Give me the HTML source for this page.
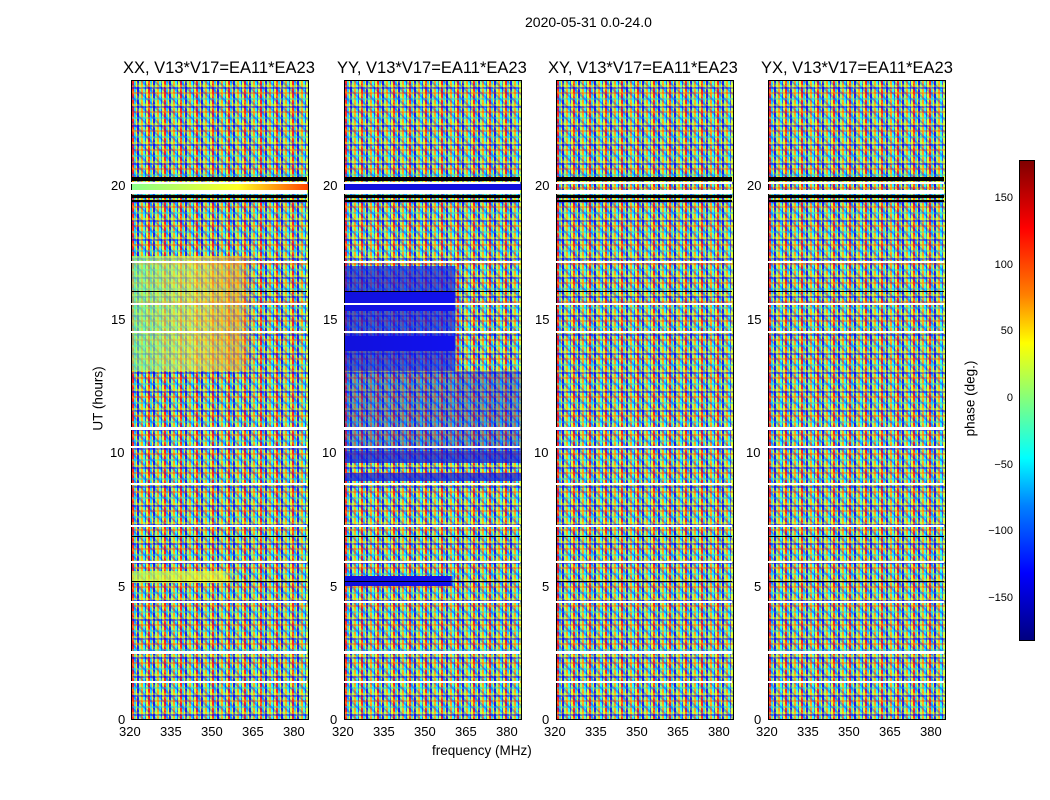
<!DOCTYPE html>
<html><head><meta charset="utf-8"><style>
body{margin:0;width:1050px;height:800px;background:#fff;position:relative;overflow:hidden;font-family:"Liberation Sans","DejaVu Sans",sans-serif;color:#000}
.t{position:absolute;font-size:13px;white-space:nowrap}
.tt{position:absolute;font-size:16.5px;white-space:nowrap}
.p{position:absolute;top:80px;width:176px;height:638px;border:1px solid #000;overflow:hidden;
background:
repeating-linear-gradient(45deg,transparent 0 2px,rgba(255,255,0,.3) 2px 4px,transparent 4px 7px,rgba(0,0,255,.3) 7px 9px),
repeating-linear-gradient(0deg,transparent 0 3px,rgba(0,0,255,.45) 3px 5px,rgba(255,255,0,.35) 5px 7px,transparent 7px 11px,rgba(0,200,255,.45) 11px 13px,transparent 13px 17px,rgba(255,60,0,.4) 17px 19px),
repeating-linear-gradient(90deg,#f22 0 2px,#2cf 2px 4px,#ee2 4px 5px,#22e 5px 7px,#8f8 7px 9px,#f92 9px 11px,#2ff 11px 13px,#44f 13px 14px,#cf4 14px 16px)}
.l{position:absolute;left:0;width:100%}
.w{background:#fff}.k{background:#000}
.cb{position:absolute;font-size:11px;width:30px;text-align:right;left:983px}
</style></head><body>
<div class="t" style="left:525px;top:14px;font-size:14px">2020-05-31 0.0-24.0</div>

<div class="tt" style="left:123px;top:59px">XX, V13*V17=EA11*EA23</div>
<div class="tt" style="left:337px;top:59px">YY, V13*V17=EA11*EA23</div>
<div class="tt" style="left:548px;top:59px">XY, V13*V17=EA11*EA23</div>
<div class="tt" style="left:761px;top:59px">YX, V13*V17=EA11*EA23</div>

<div class="p" style="left:131px">
 <div class="l" style="top:175px;height:115px;opacity:.6;background:linear-gradient(90deg,#8f8 0,#ee4 35%,#fa2 60%,transparent 70%)"></div>
 <div class="l" style="top:490px;height:12px;opacity:.7;background:linear-gradient(90deg,#cf4 0,#ff2 50%,transparent 60%)"></div>
 <div class="l" style="top:103px;height:6px;background:linear-gradient(90deg,#8f8,#ff2 60%,#f40)"></div>
</div>
<div class="p" style="left:344px">
 <div class="l" style="top:185px;height:105px;opacity:.65;background:linear-gradient(90deg,#11d 0,#11e 62%,transparent 64%)"></div>
 <div class="l" style="top:210px;height:20px;background:linear-gradient(90deg,#11d 0,#11e 62%,transparent 63%)"></div>
 <div class="l" style="top:255px;height:15px;background:linear-gradient(90deg,#11d 0,#11e 62%,transparent 63%)"></div>
 <div class="l" style="top:290px;height:80px;opacity:.35;background:#11d"></div>
 <div class="l" style="top:370px;height:12px;opacity:.7;background:#11d"></div>
 <div class="l" style="top:392px;height:8px;opacity:.7;background:#11d"></div>
 <div class="l" style="top:495px;height:10px;background:linear-gradient(90deg,#11d 0,#11e 60%,transparent 62%)"></div>
 <div class="l" style="top:103px;height:6px;background:#11d"></div>
</div>
<div class="p" style="left:556px"></div>
<div class="p" style="left:768px"></div>

<div style="position:absolute;left:131px;top:81px;width:176px;height:638px">
 <div class="l k" style="top:96px;height:4px"></div><div class="l w" style="top:101px;height:2px"></div>
 <div class="l w" style="top:109px;height:4px"></div><div class="l k" style="top:114px;height:3px"></div><div class="l k" style="top:119px;height:2px"></div>
 <div class="l w" style="top:180px;height:2px"></div><div class="l w" style="top:222px;height:2px"></div><div class="l k" style="top:210px;height:1px"></div>
 <div class="l w" style="top:250px;height:2px"></div><div class="l w" style="top:346px;height:3px"></div>
 <div class="l w" style="top:402px;height:2px"></div><div class="l w" style="top:365px;height:2px"></div><div class="l w" style="top:444px;height:2px"></div>
 <div class="l w" style="top:480px;height:2px"></div><div class="l w" style="top:520px;height:2px"></div><div class="l w" style="top:570px;height:3px"></div>
 <div class="l w" style="top:600px;height:2px"></div><div class="l k" style="top:500px;height:1px"></div><div class="l k" style="top:455px;height:1px"></div>
</div>
<div style="position:absolute;left:344px;top:81px;width:176px;height:638px">
 <div class="l k" style="top:96px;height:4px"></div><div class="l w" style="top:101px;height:2px"></div>
 <div class="l w" style="top:109px;height:4px"></div><div class="l k" style="top:114px;height:3px"></div><div class="l k" style="top:119px;height:2px"></div>
 <div class="l w" style="top:180px;height:2px"></div><div class="l w" style="top:222px;height:2px"></div><div class="l k" style="top:210px;height:1px"></div>
 <div class="l w" style="top:250px;height:2px"></div><div class="l w" style="top:346px;height:3px"></div>
 <div class="l w" style="top:402px;height:2px"></div><div class="l w" style="top:365px;height:2px"></div><div class="l w" style="top:444px;height:2px"></div>
 <div class="l w" style="top:480px;height:2px"></div><div class="l w" style="top:520px;height:2px"></div><div class="l w" style="top:570px;height:3px"></div>
 <div class="l w" style="top:600px;height:2px"></div><div class="l k" style="top:500px;height:1px"></div><div class="l k" style="top:455px;height:1px"></div>
</div>
<div style="position:absolute;left:556px;top:81px;width:176px;height:638px">
 <div class="l k" style="top:96px;height:4px"></div><div class="l w" style="top:101px;height:2px"></div>
 <div class="l w" style="top:109px;height:4px"></div><div class="l k" style="top:114px;height:3px"></div><div class="l k" style="top:119px;height:2px"></div>
 <div class="l w" style="top:180px;height:2px"></div><div class="l w" style="top:222px;height:2px"></div><div class="l k" style="top:210px;height:1px"></div>
 <div class="l w" style="top:250px;height:2px"></div><div class="l w" style="top:346px;height:3px"></div>
 <div class="l w" style="top:402px;height:2px"></div><div class="l w" style="top:365px;height:2px"></div><div class="l w" style="top:444px;height:2px"></div>
 <div class="l w" style="top:480px;height:2px"></div><div class="l w" style="top:520px;height:2px"></div><div class="l w" style="top:570px;height:3px"></div>
 <div class="l w" style="top:600px;height:2px"></div><div class="l k" style="top:500px;height:1px"></div><div class="l k" style="top:455px;height:1px"></div>
</div>
<div style="position:absolute;left:768px;top:81px;width:176px;height:638px">
 <div class="l k" style="top:96px;height:4px"></div><div class="l w" style="top:101px;height:2px"></div>
 <div class="l w" style="top:109px;height:4px"></div><div class="l k" style="top:114px;height:3px"></div><div class="l k" style="top:119px;height:2px"></div>
 <div class="l w" style="top:180px;height:2px"></div><div class="l w" style="top:222px;height:2px"></div><div class="l k" style="top:210px;height:1px"></div>
 <div class="l w" style="top:250px;height:2px"></div><div class="l w" style="top:346px;height:3px"></div>
 <div class="l w" style="top:402px;height:2px"></div><div class="l w" style="top:365px;height:2px"></div><div class="l w" style="top:444px;height:2px"></div>
 <div class="l w" style="top:480px;height:2px"></div><div class="l w" style="top:520px;height:2px"></div><div class="l w" style="top:570px;height:3px"></div>
 <div class="l w" style="top:600px;height:2px"></div><div class="l k" style="top:500px;height:1px"></div><div class="l k" style="top:455px;height:1px"></div>
</div>

<div class="t" style="left:111px;top:178px">20</div><div class="t" style="left:111px;top:312px">15</div><div class="t" style="left:110px;top:445px">10</div><div class="t" style="left:118px;top:579px">5</div><div class="t" style="left:118px;top:712px">0</div>
<div class="t" style="left:323px;top:178px">20</div><div class="t" style="left:323px;top:312px">15</div><div class="t" style="left:322px;top:445px">10</div><div class="t" style="left:330px;top:579px">5</div><div class="t" style="left:330px;top:712px">0</div>
<div class="t" style="left:535px;top:178px">20</div><div class="t" style="left:535px;top:312px">15</div><div class="t" style="left:534px;top:445px">10</div><div class="t" style="left:542px;top:579px">5</div><div class="t" style="left:542px;top:712px">0</div>
<div class="t" style="left:747px;top:178px">20</div><div class="t" style="left:747px;top:312px">15</div><div class="t" style="left:746px;top:445px">10</div><div class="t" style="left:754px;top:579px">5</div><div class="t" style="left:754px;top:712px">0</div>

<div class="t" style="left:119px;top:724px">320</div><div class="t" style="left:160px;top:724px">335</div><div class="t" style="left:201px;top:724px">350</div><div class="t" style="left:242px;top:724px">365</div><div class="t" style="left:283px;top:724px">380</div>
<div class="t" style="left:332px;top:724px">320</div><div class="t" style="left:373px;top:724px">335</div><div class="t" style="left:414px;top:724px">350</div><div class="t" style="left:455px;top:724px">365</div><div class="t" style="left:496px;top:724px">380</div>
<div class="t" style="left:544px;top:724px">320</div><div class="t" style="left:585px;top:724px">335</div><div class="t" style="left:626px;top:724px">350</div><div class="t" style="left:667px;top:724px">365</div><div class="t" style="left:708px;top:724px">380</div>
<div class="t" style="left:756px;top:724px">320</div><div class="t" style="left:797px;top:724px">335</div><div class="t" style="left:838px;top:724px">350</div><div class="t" style="left:879px;top:724px">365</div><div class="t" style="left:920px;top:724px">380</div>

<div class="t" style="left:432px;top:743px;font-size:13.5px">frequency (MHz)</div>
<div class="t" style="left:48px;top:391px;transform:rotate(-90deg);width:100px;text-align:center;font-size:13.5px">UT (hours)</div>

<div style="position:absolute;left:1019px;top:160px;width:14px;height:479px;border:1px solid #000;background:linear-gradient(180deg,#800000 0%,#ff0000 14%,#ff8000 28%,#ffff00 38%,#80ff80 50%,#00ffff 62%,#0080ff 72%,#0000ff 86%,#000080 100%)"></div>
<div class="cb" style="top:192px">150</div>
<div class="cb" style="top:259px">100</div>
<div class="cb" style="top:325px">50</div>
<div class="cb" style="top:392px">0</div>
<div class="cb" style="top:459px">−50</div>
<div class="cb" style="top:525px">−100</div>
<div class="cb" style="top:592px">−150</div>
<div class="t" style="left:920px;top:391px;transform:rotate(-90deg);width:100px;text-align:center;font-size:13.5px">phase (deg.)</div>
</body></html>
